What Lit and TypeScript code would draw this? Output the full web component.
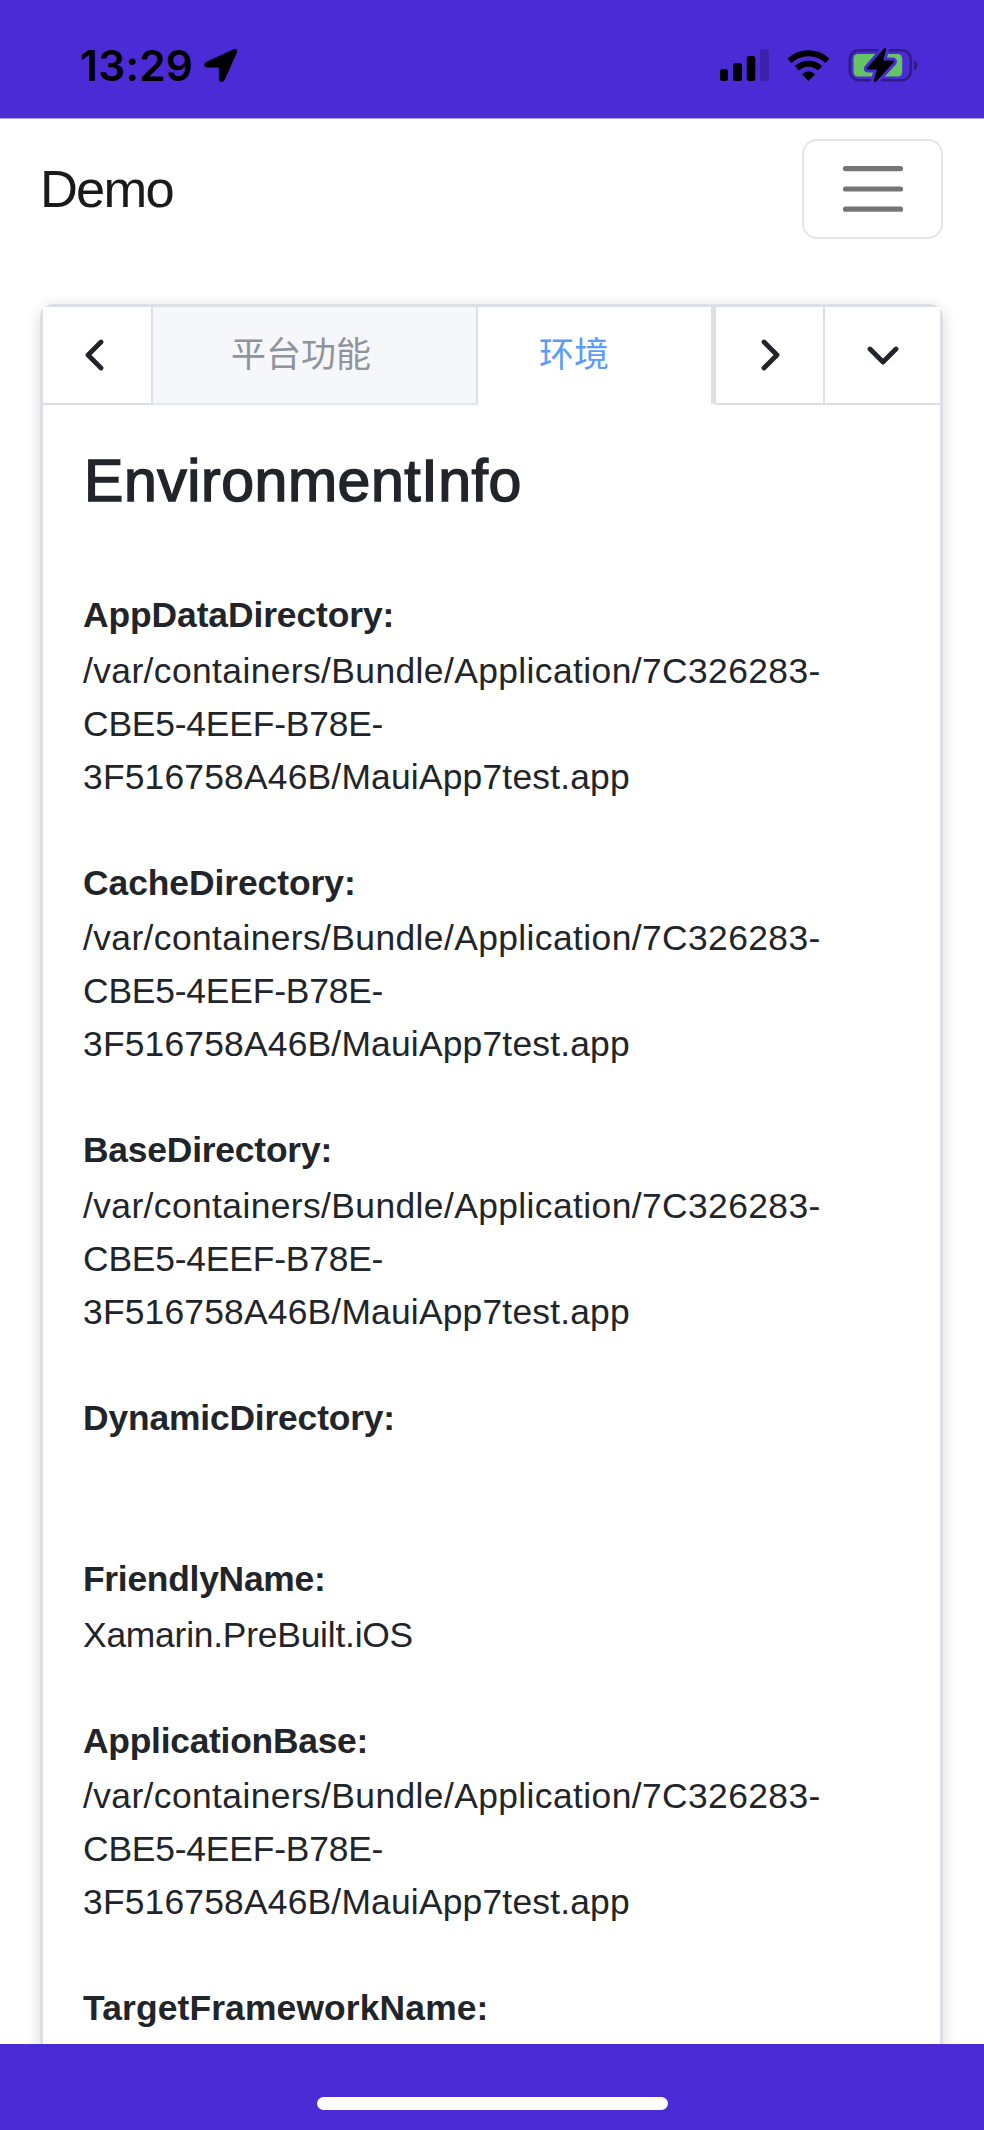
import { LitElement, html, css } from "lit";
import { customElement, state } from "lit/decorators.js";
import { styleMap } from "lit/directives/style-map.js";

interface Run {
  text: string;
  tracking: number;
}

interface Entry {
  name: Run;
  value: Run[];
}

const BUNDLE: Run[] = [
  { text: "/var/containers/Bundle/Application/7C326283-", tracking: 0.4 },
  { text: "CBE5-4EEF-B78E-", tracking: -0.18 },
  { text: "3F516758A46B/MauiApp7test.app", tracking: 0.2 },
];

@customElement("status-bar")
class StatusBar extends LitElement {
  static styles = css`
    :host {
      display: flex;
      justify-content: space-between;
      height: 118px;
      box-sizing: border-box;
      padding: 40px 66px 0 80px;
      background: #4b2bd6;
      box-shadow: 0 1px 0 #ac9dec;
      flex: none;
    }
    .left {
      display: flex;
      gap: 13px;
    }
    .time {
      font: 600 42.500px/51px Inter, sans-serif;
      letter-spacing: 0.2px;
      width: 111px;
      white-space: nowrap;
      color: #000;
    }
    svg {
      display: block;
      flex: none;
    }
  `;
  render() {
    return html`
      <div class="left">
        <span class="time">13:29</span>
        <svg width="36" height="50" viewBox="204 40 36 50">
          <path d="M206.500 61.800L233 49.600Q238.600 47.600 236.700 53L224.800 79.500Q223.700 82 221.600 82Q218.900 82 218.900 79V68.700Q218.900 67.400 217.600 67.400H207.200Q204.300 67.400 204.300 64.500Q204.300 62.800 206.500 61.800Z"></path>
        </svg>
      </div>
      <svg width="200" height="50" viewBox="718 40 200 50">
        <rect x="720" y="69" width="8" height="12" rx="2.500"></rect>
        <rect x="733" y="63" width="9" height="18" rx="2.500"></rect>
        <rect x="746.800" y="56" width="8.500" height="25" rx="2.500"></rect>
        <rect x="760" y="49" width="9" height="32" rx="2.500" fill="#3c22ab"></rect>
        <g fill="none" stroke="#000" stroke-width="6">
          <path d="M789.500 60.800A27.500 27.500 0 0 1 827.500 60.800"></path>
          <path d="M796.800 68.300A17 17 0 0 1 820.200 68.300"></path>
        </g>
        <path d="M808.500 81L802 74.300Q808.500 68.200 815 74.300Z"></path>
        <rect x="849.800" y="50.300" width="61" height="30" rx="9" fill="none" stroke="#2f1b87" stroke-width="2.600"></rect>
        <path d="M914 60Q917.300 62 917.300 65.200T914 70.500Z" fill="#2f1b87"></path>
        <rect x="853.500" y="54" width="48.700" height="22.500" rx="4.500" fill="#65c466"></rect>
        <path d="M884 48.500L867 68Q866.300 69.600 868 69.600H877L873.800 80.300Q873.800 83 876 81.700L893.700 62.300Q894.600 60.600 892.700 60.600H883L886 50Q886.200 47.200 884 48.500Z" stroke="#4b2bd6" stroke-width="6" paint-order="stroke"></path>
      </svg>
    `;
  }
}

@customElement("tab-strip")
class TabStrip extends LitElement {
  @state() private active = 1;

  static styles = css`
    :host {
      display: grid;
      grid-template-columns: 110px 325px 238px 109px 1fr;
      height: 98px;
      font: 35px/90px "Noto Sans CJK SC", sans-serif;
      color: #909399;
    }
    .cell {
      box-sizing: border-box;
      border: 0 solid #dcdfe6;
      border-right-width: 2px;
      border-bottom-width: 2px;
      display: flex;
      align-items: center;
      justify-content: center;
      background: #fff;
    }
    .tab {
      background: #f5f7fa;
      border-bottom-color: #e4e7ed;
      justify-content: flex-end;
      align-items: flex-start;
      padding-right: 105px;
    }
    .tab.active {
      color: #5a9cf8;
      background: #fff;
      border-bottom-color: transparent;
      border-right-width: 5px;
      padding-right: 102px;
    }
    .last {
      border-right-width: 0;
    }
    .prev {
      padding-right: 4px;
    }
    path {
      fill: none;
      stroke: #212529;
      stroke-width: 4.800;
      stroke-linecap: round;
      stroke-linejoin: round;
    }
  `;
  render() {
    return html`
      <div class="cell prev">
        <svg width="20" height="34"><path d="M16 4L3 17L16 30"></path></svg>
      </div>
      ${["平台功能", "环境"].map(
        (t, i) => html`<div class="cell tab ${i === this.active ? "active" : ""}" @click=${() => (this.active = i)}>${t}</div>`
      )}
      <div class="cell">
        <svg width="20" height="34"><path d="M4 4L17 17L4 30"></path></svg>
      </div>
      <div class="cell last">
        <svg width="34" height="20"><path d="M4 4L17 17L30 4"></path></svg>
      </div>
    `;
  }
}

@customElement("app-root")
class AppRoot extends LitElement {
  private entries: Entry[] = [
    { name: { text: "AppDataDirectory:", tracking: -0.08 }, value: BUNDLE },
    { name: { text: "CacheDirectory:", tracking: -0.05 }, value: BUNDLE },
    { name: { text: "BaseDirectory:", tracking: -0.2 }, value: BUNDLE },
    { name: { text: "DynamicDirectory:", tracking: -0.16 }, value: [] },
    { name: { text: "FriendlyName:", tracking: -0.26 }, value: [{ text: "Xamarin.PreBuilt.iOS", tracking: -0.22 }] },
    { name: { text: "ApplicationBase:", tracking: -0.25 }, value: BUNDLE },
    { name: { text: "TargetFrameworkName:", tracking: 0.15 }, value: [] },
  ];

  static styles = css`
    :host {
      display: flex;
      flex-direction: column;
      height: 2130px;
      overflow: hidden;
      background: #fff;
      color: #212529;
      font-family: "Liberation Sans", Arial, sans-serif;
    }
    .nav {
      display: flex;
      flex: none;
      justify-content: space-between;
      align-items: flex-start;
      padding: 21px 41px 0 40px;
      height: 186px;
      box-sizing: border-box;
    }
    .brand {
      font-size: 52.500px;
      line-height: 100px;
      letter-spacing: -1.800px;
      color: #1a1a1a;
    }
    .toggler {
      box-sizing: border-box;
      width: 141px;
      height: 100px;
      border: 2.600px solid #e5e5e5;
      border-radius: 15px;
      display: flex;
      align-items: center;
      justify-content: center;
    }
    .viewport {
      flex: 1;
      min-height: 0;
      margin-top: -40px;
      padding: 40px 40px 0;
      overflow: hidden;
    }
    .card {
      box-sizing: border-box;
      width: 903px;
      height: 1900px;
      border: 3px solid #dcdfe6;
      border-radius: 13px;
      box-shadow: 0 5px 16px rgba(0, 0, 0, 0.12), 0 0 16px rgba(0, 0, 0, 0.04);
    }
    .body {
      padding: 41px 40px 0;
    }
    h3 {
      margin: 0 0 73px 1px;
      font-weight: 400;
      font-size: 59px;
      line-height: 70px;
      letter-spacing: 0.550px;
      -webkit-text-stroke: 1.500px #212529;
    }
    dl {
      margin: 0;
      font-size: 35.400px;
      line-height: 53px;
    }
    dt {
      font-weight: 700;
      margin-bottom: 2.500px;
    }
    dd {
      margin: 0 0 53px;
      min-height: 53px;
      width: 760px;
    }
    .home {
      flex: none;
      height: 86px;
      background: #4b2bd6;
      display: flex;
      justify-content: center;
      align-items: flex-start;
      padding-top: 53px;
      box-sizing: border-box;
    }
    .indicator {
      width: 351px;
      height: 13px;
      border-radius: 7px;
      background: #fff;
    }
  `;

  private run(r: Run) {
    return html`<span style=${styleMap({ letterSpacing: `${r.tracking}px` })}>${r.text}</span>`;
  }

  render() {
    return html`
      <status-bar></status-bar>
      <div class="nav">
        <span class="brand">Demo</span>
        <div class="toggler">
          <svg width="62" height="50" stroke="#757575" stroke-width="5.200" stroke-linecap="round">
            <path d="M3.500 4.600H58.500M3.500 25H58.500M3.500 45.200H58.500"></path>
          </svg>
        </div>
      </div>
      <div class="viewport">
        <div class="card">
          <tab-strip></tab-strip>
          <div class="body">
            <h3>EnvironmentInfo</h3>
            <dl>
              ${this.entries.map(
                (e) => html`<dt>${this.run(e.name)}</dt><dd>${e.value.map((r) => html`${this.run(r)}<wbr>`)}</dd>`
              )}
            </dl>
          </div>
        </div>
      </div>
      <div class="home"><div class="indicator"></div></div>
    `;
  }
}
